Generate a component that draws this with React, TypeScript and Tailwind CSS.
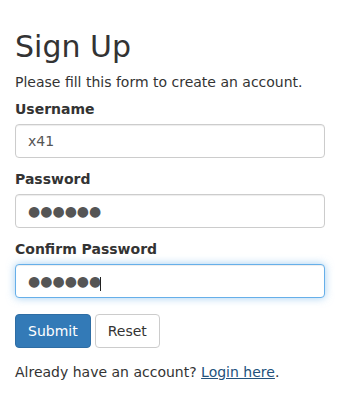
import React from "react";

const inputCls =
  "block w-[310px] h-[34px] px-[12px] py-[6px] text-[14px] leading-[20px] text-[#555] bg-white border border-[#ccc] rounded-[4px] shadow-[inset_0_1px_1px_rgba(0,0,0,0.075)] outline-none";

const dots = "\u25CF\u25CF\u25CF\u25CF\u25CF\u25CF";

export default function App() {
  return (
    <div
      className="w-[356px] h-[410px] bg-white text-[#333] text-[14px] leading-[20px] px-[15px] pt-[30px]"
      style={{ fontFamily: '"DejaVu Sans", "Liberation Sans", sans-serif' }}
    >
      <h2 className="text-[30px] leading-[33px] font-normal m-0">Sign Up</h2>
      <p className="mt-[9px] mb-[7px]">Please fill this form to create an account.</p>
      <form onSubmit={(e) => e.preventDefault()}>
        <div className="mb-[11px]">
          <label className="block font-bold mb-[5px]">Username</label>
          <input type="text" readOnly defaultValue="x41" className={inputCls} />
        </div>
        <div className="mb-[11px]">
          <label className="block font-bold mb-[5px]">Password</label>
          <input type="text" readOnly defaultValue={dots} aria-label="Password" className={inputCls} />
        </div>
        <div className="mb-[16px]">
          <label className="block font-bold mb-[5px]">Confirm Password</label>
          <div className="relative w-[310px]">
            <input
              type="text"
              readOnly
              defaultValue={dots}
              aria-label="Confirm Password"
              className={
                "block w-[310px] h-[34px] px-[12px] py-[6px] text-[14px] leading-[20px] text-[#555] bg-white border border-[#66afe9] rounded-[4px] shadow-[inset_0_1px_1px_rgba(0,0,0,0.075),0_0_8px_rgba(102,175,233,0.6)] outline-none"
              }
            />
            <span className="absolute left-[85px] top-[13px] w-[1px] h-[14px] bg-[#222]" />
          </div>
        </div>
        <div className="flex gap-[4px]">
          <button
            type="submit"
            className="h-[34px] px-[12px] text-[14px] leading-[20px] text-white bg-[#337ab7] border border-[#2e6da4] rounded-[4px]"
          >
            Submit
          </button>
          <button
            type="reset"
            className="h-[34px] px-[12px] text-[14px] leading-[20px] text-[#333] bg-white border border-[#ccc] rounded-[4px]"
          >
            Reset
          </button>
        </div>
      </form>
      <p className="mt-[14px]">
        Already have an account? <a href="#" className="text-[#23527c] underline">Login here</a>.
      </p>
    </div>
  );
}
